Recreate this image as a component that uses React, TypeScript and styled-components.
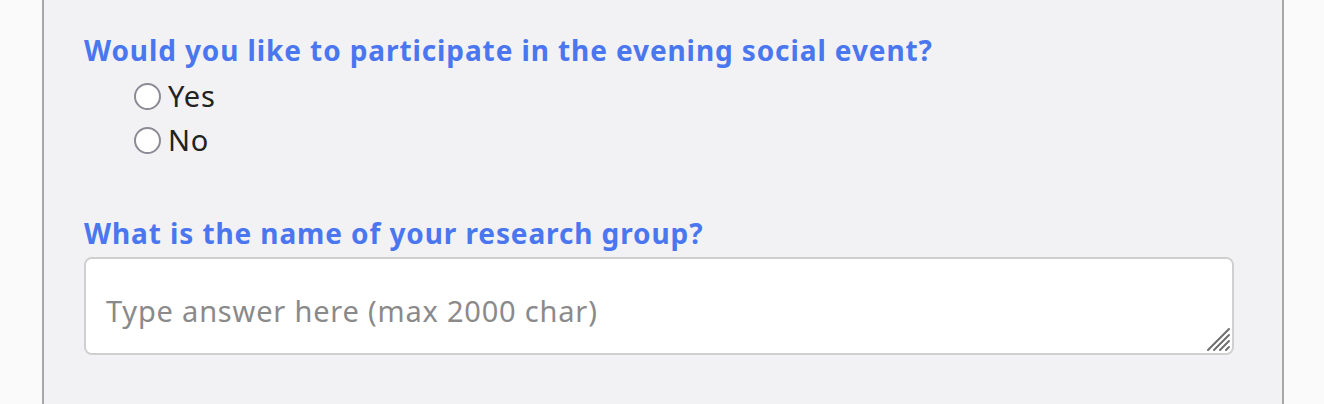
import styled, { createGlobalStyle } from 'styled-components';

const GlobalStyle = createGlobalStyle`
  html, body {
    margin: 0;
    padding: 0;
    background: #fafafa;
    font-family: "Noto Sans", Lato, sans-serif;
  }
`;

const Page = styled.div`
  height: 404px;
  overflow: hidden;
  padding: 0 40px 0 42px;
`;

const Panel = styled.div`
  background: #f2f2f4;
  border-left: 2px solid #a8a8a8;
  border-right: 2px solid #a8a8a8;
  height: 404px;
  box-sizing: border-box;
  padding: 31px 48px 0 40px;
  display: flex;
  flex-direction: column;
`;

const Question = styled.fieldset<{ $gap?: number }>`
  border: none;
  margin: 0 0 ${({ $gap }) => $gap ?? 0}px;
  padding: 0;
  display: flex;
  flex-direction: column;
`;

const Label = styled.label`
  font-size: 28px;
  font-weight: 700;
  letter-spacing: 0.9px;
  color: #4a76ef;
  line-height: 38px;
  margin-bottom: 5px;
`;

const Option = styled.label`
  display: flex;
  align-items: center;
  gap: 7px;
  padding-left: 50px;
  font-size: 29px;
  letter-spacing: 0.8px;
  color: #222;
  line-height: 44px;
`;

const Radio = styled.input`
  appearance: none;
  width: 27px;
  height: 27px;
  margin: 0;
  border: 2px solid #8c8a95;
  border-radius: 50%;
  background: #fff;
  box-sizing: border-box;
`;

const BoxWrap = styled.div`
  position: relative;
  display: flex;
`;

const AnswerBox = styled.textarea`
  width: 100%;
  height: 98px;
  box-sizing: border-box;
  border: 2px solid #cfcfcf;
  border-radius: 8px;
  background: #fff;
  padding: 32px 20px 28px;
  font-family: inherit;
  font-size: 29px;
  letter-spacing: 0.8px;
  color: #333;
  resize: none;
  &::placeholder {
    color: #8a8a8a;
  }
`;

const Grip = styled.svg`
  position: absolute;
  right: 3px;
  bottom: 3px;
  width: 26px;
  height: 26px;
  pointer-events: none;
`;

export default function App() {
  return (
    <>
      <GlobalStyle />
      <Page>
        <Panel>
          <Question $gap={52}>
            <Label>Would you like to participate in the evening social event?</Label>
            <Option>
              <Radio type="radio" name="social" />
              Yes
            </Option>
            <Option>
              <Radio type="radio" name="social" />
              No
            </Option>
          </Question>
          <Question>
            <Label htmlFor="group">What is the name of your research group?</Label>
            <BoxWrap>
              <AnswerBox id="group" placeholder="Type answer here (max 2000 char)" />
              <Grip viewBox="0 0 26 26">
                <g stroke="#6e6e6e" strokeWidth="2" strokeLinecap="round">
                  <line x1="3" y1="24" x2="24" y2="3" />
                  <line x1="9" y1="24" x2="24" y2="9" />
                  <line x1="15" y1="24" x2="24" y2="15" />
                  <line x1="21" y1="24" x2="24" y2="21" />
                </g>
              </Grip>
            </BoxWrap>
          </Question>
        </Panel>
      </Page>
    </>
  );
}
